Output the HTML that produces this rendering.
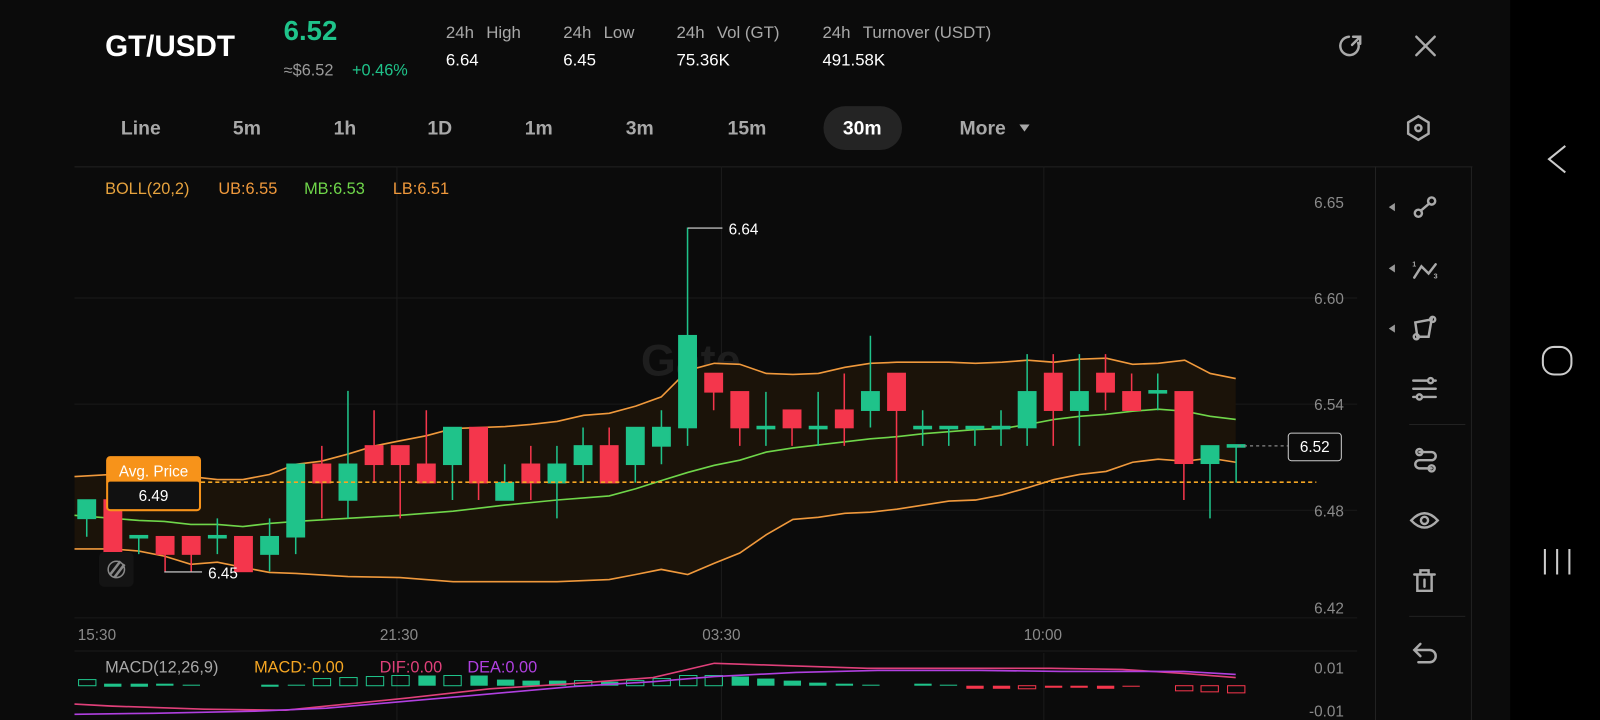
<!DOCTYPE html>
<html><head><meta charset="utf-8"><style>
html,body{margin:0;padding:0;background:#0a0a0a;width:1600px;height:720px;overflow:hidden}
svg{display:block}
text{font-family:"Liberation Sans",sans-serif}
</style></head><body>
<svg width="1600" height="720" viewBox="0 0 1568 705.6" xmlns="http://www.w3.org/2000/svg">
<rect width="1568" height="706" fill="#0b0b0b"/>
<rect x="1480" width="88" height="706" fill="#000"/>

<!-- header -->
<text x="103" y="55" fill="#fff" font-size="29" font-weight="bold">GT/USDT</text>
<text x="278" y="39" fill="#1fc38a" font-size="27" font-weight="bold">6.52</text>
<text x="278" y="74" fill="#9a9a9a" font-size="16">≈$6.52</text>
<text x="345" y="74" fill="#1fc38a" font-size="16">+0.46%</text>
<g fill="#a8a8a8" font-size="16.5">
<text x="437" y="37">24h<tspan dx="12">High</tspan></text>
<text x="552" y="37">24h<tspan dx="12">Low</tspan></text>
<text x="663" y="37">24h<tspan dx="12">Vol (GT)</tspan></text>
<text x="806" y="37">24h<tspan dx="12">Turnover (USDT)</tspan></text>
</g>
<g fill="#fff" font-size="16.5">
<text x="437" y="64">6.64</text><text x="552" y="64">6.45</text><text x="663" y="64">75.36K</text><text x="806" y="64">491.58K</text>
</g>
<!-- refresh + close -->
<g stroke="#aaa" stroke-width="2.4" fill="none" stroke-linecap="round">
<path d="M1331 42 A9 9 0 1 1 1322 36"/><path d="M1326 36 L1333 36 L1333 43 M1333 36 L1325 44"/>
<path d="M1388 36 L1406 54 M1406 36 L1388 54"/>
</g>

<!-- tabs -->
<rect x="807" y="104" width="77" height="43" rx="21.5" fill="#242424"/>
<g fill="#a8a8a8" font-size="19" font-weight="bold" text-anchor="middle">
<text x="138" y="132">Line</text><text x="242" y="132">5m</text><text x="338" y="132">1h</text><text x="431" y="132">1D</text><text x="528" y="132">1m</text><text x="627" y="132">3m</text><text x="732" y="132">15m</text>
<text x="845" y="132" fill="#fff">30m</text>
<text x="963" y="132">More</text>
</g>
<path d="M999 122 L1009 122 L1004 129Z" fill="#a8a8a8"/>
<g stroke="#aaa" stroke-width="2.4" fill="none"><path d="M1390 114 L1400 120 L1400 131 L1390 137 L1380 131 L1380 120Z"/><circle cx="1390" cy="125.5" r="3"/></g>

<!-- chart frame -->
<path d="M73 163.5 H1443" stroke="#222" stroke-width="1"/>
<path d="M1348 163 V706 M1442 163 V706" stroke="#222"/>
<g stroke="#1b1b1b" stroke-width="1">
<path d="M73 292 H1330 M73 396 H1330 M73 500 H1330"/>
<path d="M389 163 V605 M707 163 V605 M1023 163 V605 M389 640 V706 M707 640 V706 M1023 640 V706"/>
<path d="M73 605.5 H1330 M73 638 H1330"/>
</g>
<text x="628" y="368" fill="#1e1e1e" font-size="44" font-weight="bold">Gate</text>

<!-- legend -->
<g font-size="16">
<text x="103" y="190" fill="#e7a33e">BOLL(20,2)</text>
<text x="214" y="190" fill="#f0993c">UB:6.55</text>
<text x="298" y="190" fill="#6fd64a">MB:6.53</text>
<text x="385" y="190" fill="#f0993c">LB:6.51</text>
</g>
<g fill="#8a8a8a" font-size="15" text-anchor="end">
<text x="1317" y="204">6.65</text><text x="1317" y="298">6.60</text><text x="1317" y="402">6.54</text><text x="1317" y="506">6.48</text><text x="1317" y="601">6.42</text>
<text x="1317" y="660">0.01</text><text x="1317" y="702">-0.01</text>
</g>
<g fill="#8a8a8a" font-size="15" text-anchor="middle">
<text x="95" y="627">15:30</text><text x="391" y="627">21:30</text><text x="707" y="627">03:30</text><text x="1022" y="627">10:00</text>
</g>

<!-- bollinger fill -->
<path fill="#1b1309" d="M73 467 L110 465 L187 467 L213 470 L238 470 L264 465 L290 455 L315 452 L341 445 L367 437 L392 432 L418 427 L444 420 L495 418 L520 416 L546 413 L572 407 L597 405 L623 398 L648 389 L674 363 L700 356 L725 357 L751 366 L777 367 L802 366 L828 360 L853 356 L879 355 L930 355 L956 356 L982 355 L1007 353 L1033 355 L1058 352 L1084 351 L1110 357 L1135 356 L1161 353 L1186 366 L1211 371 L1211 453 L1186 449 L1161 452 L1135 450 L1110 453 L1084 462 L1058 465 L1033 470 L1007 478 L982 485 L956 490 L930 491 L905 495 L879 499 L853 502 L828 503 L802 507 L777 509 L751 524 L725 542 L700 552 L674 563 L648 558 L623 563 L597 568 L546 570 L495 570 L444 570 L392 566 L341 565 L290 562 L264 561 L238 556 L213 551 L187 553 L161 545 L136 540 L110 538 L73 538Z"/>
<g fill="none" stroke-width="1.6">
<path stroke="#f0993c" d="M73 467 L110 465 L187 467 L213 470 L238 470 L264 465 L290 455 L315 452 L341 445 L367 437 L392 432 L418 427 L444 420 L495 418 L520 416 L546 413 L572 407 L597 405 L623 398 L648 389 L674 363 L700 356 L725 357 L751 366 L777 367 L802 366 L828 360 L853 356 L879 355 L930 355 L956 356 L982 355 L1007 353 L1033 355 L1058 352 L1084 351 L1110 357 L1135 356 L1161 353 L1186 366 L1211 371"/>
<path stroke="#f0993c" d="M73 538 L110 538 L136 540 L161 545 L187 553 L213 551 L238 556 L264 561 L290 562 L341 565 L392 566 L444 570 L495 570 L546 570 L597 568 L623 563 L648 558 L674 563 L700 552 L725 542 L751 524 L777 509 L802 507 L828 503 L853 502 L879 499 L905 495 L930 491 L956 490 L982 485 L1007 478 L1033 470 L1058 465 L1084 462 L1110 453 L1135 450 L1161 452 L1186 449 L1211 453"/>
<path stroke="#6fd64a" d="M73 505 L110 508 L136 510 L161 511 L187 514 L213 514 L238 516 L264 513 L290 511 L341 508 L392 505 L444 501 L495 495 L546 490 L572 488 L597 486 L623 479 L648 471 L674 463 L700 456 L725 451 L751 443 L777 439 L802 436 L828 433 L853 430 L879 428 L905 425 L930 423 L956 421 L982 420 L1007 416 L1033 411 L1058 408 L1084 406 L1110 403 L1135 401 L1161 403 L1186 408 L1211 411"/>
</g>

<!-- candles -->
<g stroke-width="1.5">
<g fill="#1fc38a" stroke="#1fc38a">
<path d="M85 490V526 M136 526V543 M213 508V543 M264.2 508V560 M289.8 455V543 M341 383V508 M443.4 419V490 M494.6 455V490 M545.8 437V508 M571.4 419V473 M622.6 419V473 M648.2 402V455 M673.8 223V437 M750.6 384V437 M801.8 384V437 M853 329V419 M904.2 402V437 M929.8 419V437 M955.4 419V437 M981 402V437 M1006.6 347V437 M1057.8 347V437 M1134.6 366V402 M1185.8 437V508 M1211.4 437V473"/>
<rect x="76.5" y="490" width="17" height="18"/>
<rect x="127.5" y="525" width="17" height="2"/>
<rect x="204.5" y="525" width="17" height="2"/>
<rect x="255.7" y="526" width="17" height="17"/>
<rect x="281.3" y="455" width="17" height="71"/>
<rect x="332.5" y="455" width="17" height="35"/>
<rect x="434.9" y="419" width="17" height="36"/>
<rect x="486.1" y="473" width="17" height="17"/>
<rect x="537.3" y="455" width="17" height="18"/>
<rect x="562.9" y="437" width="17" height="18"/>
<rect x="614.1" y="419" width="17" height="36"/>
<rect x="639.7" y="419" width="17" height="18"/>
<rect x="665.3" y="329" width="17" height="90"/>
<rect x="742.1" y="418" width="17" height="2"/>
<rect x="793.3" y="418" width="17" height="2"/>
<rect x="844.5" y="384" width="17" height="18"/>
<rect x="895.7" y="418" width="17" height="2"/>
<rect x="921.3" y="418" width="17" height="2"/>
<rect x="946.9" y="418" width="17" height="2"/>
<rect x="972.5" y="418" width="17" height="2"/>
<rect x="998.1" y="384" width="17" height="35"/>
<rect x="1049.3" y="384" width="17" height="18"/>
<rect x="1126.1" y="383" width="17" height="2"/>
<rect x="1177.3" y="437" width="17" height="17"/>
<rect x="1202.9" y="436" width="17" height="2"/>
</g>
<g fill="#f4364c" stroke="#f4364c">
<path d="M161.8 526V560 M187.4 526V560 M315.4 437V508 M366.6 402V473 M392.2 437V508 M417.8 402V473 M469 419V490 M520.2 437V490 M597 419V473 M699.4 366V402 M725 384V437 M776.2 402V437 M827.4 366V437 M878.6 366V473 M1032.2 347V437 M1083.4 347V402 M1109 366V402 M1160.2 384V490"/>
<rect x="102.1" y="490" width="17" height="53"/>
<rect x="153.3" y="526" width="17" height="17"/>
<rect x="178.9" y="526" width="17" height="17"/>
<rect x="230.1" y="526" width="17" height="34"/>
<rect x="306.9" y="455" width="17" height="18"/>
<rect x="358.1" y="437" width="17" height="18"/>
<rect x="383.7" y="437" width="17" height="18"/>
<rect x="409.3" y="455" width="17" height="18"/>
<rect x="460.5" y="419" width="17" height="54"/>
<rect x="511.7" y="455" width="17" height="18"/>
<rect x="588.5" y="437" width="17" height="36"/>
<rect x="690.9" y="366" width="17" height="18"/>
<rect x="716.5" y="384" width="17" height="35"/>
<rect x="767.7" y="402" width="17" height="17"/>
<rect x="818.9" y="402" width="17" height="17"/>
<rect x="870.1" y="366" width="17" height="36"/>
<rect x="1023.7" y="366" width="17" height="36"/>
<rect x="1074.9" y="366" width="17" height="18"/>
<rect x="1100.5" y="384" width="17" height="18"/>
<rect x="1151.7" y="384" width="17" height="70"/>
</g>
</g>

<!-- avg price line -->
<path d="M197 472.5 H1290" stroke="#f5a623" stroke-width="1.6" stroke-dasharray="4 3"/>
<path d="M1213 437 H1262" stroke="#888" stroke-width="1.2" stroke-dasharray="3 3"/>
<rect x="104" y="447" width="93" height="54" rx="4" fill="#f7931a"/>
<rect x="106" y="472" width="89" height="27" rx="2" fill="#111"/>
<text x="150.5" y="467" fill="#fff" font-size="15" text-anchor="middle">Avg. Price</text>
<text x="150.5" y="491" fill="#fff" font-size="15" text-anchor="middle">6.49</text>
<rect x="1262.5" y="424.5" width="52" height="27" rx="3" fill="#0b0b0b" stroke="#ccc" stroke-width="1"/>
<text x="1288.5" y="443" fill="#fff" font-size="15" text-anchor="middle">6.52</text>

<!-- hi/lo markers -->
<path d="M674 223.5 H708 M161 560.5 H198" stroke="#ddd" stroke-width="1"/>
<text x="714" y="230" fill="#fff" font-size="15">6.64</text>
<text x="204" y="567" fill="#fff" font-size="15">6.45</text>
<rect x="97" y="541" width="34" height="34" rx="5" fill="#141414"/>
<g stroke="#888" stroke-width="2.5" fill="none"><path d="M108 563 L118 550 M112 566 L122 553"/><circle cx="114" cy="558" r="8" stroke-width="1.5"/></g>

<!-- MACD -->
<g font-size="16">
<text x="103" y="659" fill="#a8a8a8">MACD(12,26,9)</text>
<text x="249" y="659" fill="#f5a623">MACD:-0.00</text>
<text x="372" y="659" fill="#e0407a">DIF:0.00</text>
<text x="458" y="659" fill="#b040e0">DEA:0.00</text>
</g>
<g fill="#1fc38a">
<rect x="102" y="670" width="17" height="3"/><rect x="128" y="670" width="17" height="3"/><rect x="153" y="670" width="17" height="2"/><rect x="179" y="671" width="17" height="1"/><rect x="256" y="671" width="17" height="2"/><rect x="282" y="671" width="17" height="1"/>
<rect x="410" y="662" width="17" height="10"/><rect x="461" y="662" width="17" height="10"/><rect x="487" y="666" width="17" height="6"/><rect x="512" y="667" width="17" height="5"/><rect x="538" y="667" width="17" height="5"/><rect x="589" y="668" width="17" height="4"/>
<rect x="717" y="663" width="17" height="9"/><rect x="742" y="665" width="17" height="7"/><rect x="768" y="667" width="17" height="5"/><rect x="793" y="669" width="17" height="3"/><rect x="819" y="670" width="17" height="2"/><rect x="845" y="671" width="17" height="1"/><rect x="896" y="670" width="17" height="2"/><rect x="921" y="671" width="17" height="1"/>
</g>
<g fill="none" stroke="#1fc38a" stroke-width="1">
<rect x="77" y="666" width="17" height="6"/><rect x="333" y="664" width="17" height="8"/><rect x="359" y="663" width="17" height="9"/><rect x="384" y="662" width="17" height="10"/><rect x="435" y="662" width="17" height="10"/><rect x="563" y="667" width="17" height="5"/><rect x="614" y="667" width="17" height="5"/><rect x="640" y="665" width="17" height="7"/><rect x="666" y="662" width="17" height="10"/><rect x="691" y="662" width="17" height="10"/>
<rect x="307" y="665" width="17" height="7"/>
</g>
<g fill="#f4364c"><rect x="947" y="672" width="17" height="3"/><rect x="973" y="672" width="17" height="3"/><rect x="1024" y="672" width="17" height="2"/><rect x="1049" y="672" width="17" height="2"/><rect x="1075" y="672" width="17" height="3"/><rect x="1100" y="672" width="17" height="1"/></g>
<g fill="none" stroke="#f4364c" stroke-width="1"><rect x="998" y="672" width="17" height="3"/><rect x="1152" y="672" width="17" height="5"/><rect x="1177" y="672" width="17" height="6"/><rect x="1203" y="672" width="17" height="7"/></g>
<path fill="none" stroke="#e0407a" stroke-width="1.6" d="M73 690 L110 692 L200 695 L280 696 L320 692 L400 684 L480 675 L560 670 L640 664 L700 650 L760 652 L850 655 L950 655 L1030 655 L1100 656 L1160 660 L1211 664"/>
<path fill="none" stroke="#b040e0" stroke-width="1.6" d="M73 700 L150 699 L250 697 L320 694 L400 687 L480 680 L560 673 L640 668 L700 663 L780 659 L860 657 L960 657 L1040 658 L1100 658 L1160 658 L1211 661"/>

<!-- toolbar -->
<g fill="#999"><path d="M1361 203 L1367 199 L1367 207Z"/><path d="M1361 263 L1367 259 L1367 267Z"/><path d="M1361 322 L1367 318 L1367 326Z"/></g>
<path d="M1381 416 H1436 M1381 604 H1436" stroke="#222"/>
<g stroke="#aaa" stroke-width="2.4" fill="none" stroke-linecap="round">
<circle cx="1390" cy="209" r="3.5"/><circle cx="1403" cy="197" r="3.5"/><path d="M1393 206 L1400 200"/>
<path d="M1386 272 L1393 261 L1400 268 L1407 259"/>
<path d="M1387 316 L1403 313 L1400 330 L1389 330Z"/><circle cx="1388" cy="330" r="2.5"/><circle cx="1404" cy="313" r="2.5"/>
<path d="M1385 373 H1407 M1385 381 H1407 M1385 389 H1407"/><circle cx="1402" cy="373" r="2.5" fill="#0b0b0b"/><circle cx="1391" cy="389" r="2.5" fill="#0b0b0b"/>
<path d="M1391 443 H1403 A4 4 0 0 1 1403 451 H1391 A4 4 0 0 0 1391 459 H1403"/><circle cx="1391" cy="443" r="3"/><circle cx="1403" cy="459" r="3"/>
<path d="M1383 510 Q1396 496 1409 510 Q1396 524 1383 510Z"/><circle cx="1396" cy="510" r="3.5"/>
<path d="M1386 563 H1406 M1392 563 V559 H1400 V563 M1389 563 V579 H1403 V563 M1396 568 V575"/>
<path d="M1392 631 L1386 637 L1392 643 M1386 637 H1401 A6 6 0 0 1 1401 649 H1390"/>
</g>
<g fill="#aaa" font-size="7" font-weight="bold"><text x="1384" y="261">1</text><text x="1405" y="273">3</text></g>

<!-- system nav -->
<g stroke="#ccc" stroke-width="2" fill="none">
<path d="M1534 143 L1518 156 L1534 169"/>
<rect x="1512" y="340" width="28" height="27" rx="11"/>
<path d="M1514 538 V563 M1526 538 V563 M1538 538 V563"/>
</g>
</svg>
</body></html>
